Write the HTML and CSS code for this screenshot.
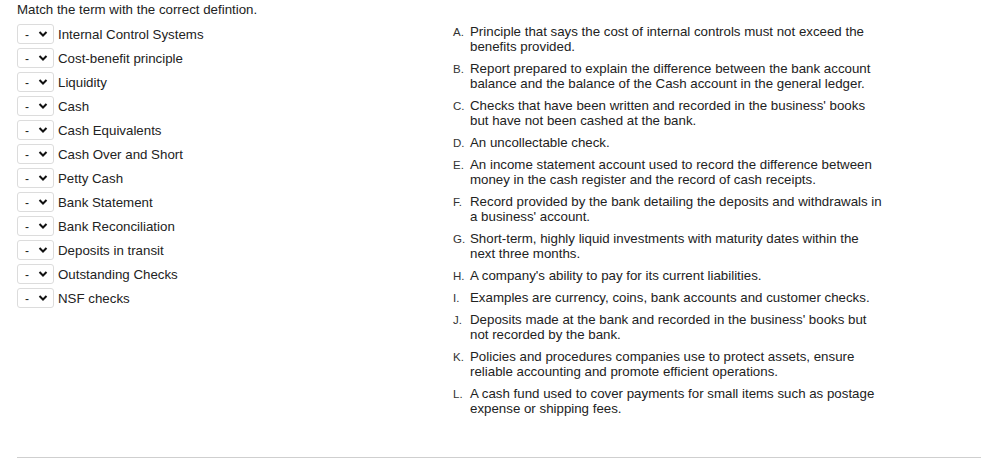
FILE: index.html
```html
<!DOCTYPE html>
<html>
<head>
<meta charset="utf-8">
<link rel="stylesheet" href="styles.css">
</head>
<body>
<div class="page">
  <div class="title">Match the term with the correct defintion.</div>
  <div class="match">
    <div class="terms">
      <div class="term"><span class="sel"><span class="dash">-</span><svg class="chev" viewBox="0 0 10 8" width="10" height="8"><path d="M1.5 2 L5 5.5 L8.5 2" fill="none" stroke="#111" stroke-width="2"/></svg></span><span class="label">Internal Control Systems</span></div>
      <div class="term"><span class="sel"><span class="dash">-</span><svg class="chev" viewBox="0 0 10 8" width="10" height="8"><path d="M1.5 2 L5 5.5 L8.5 2" fill="none" stroke="#111" stroke-width="2"/></svg></span><span class="label">Cost-benefit principle</span></div>
      <div class="term"><span class="sel"><span class="dash">-</span><svg class="chev" viewBox="0 0 10 8" width="10" height="8"><path d="M1.5 2 L5 5.5 L8.5 2" fill="none" stroke="#111" stroke-width="2"/></svg></span><span class="label">Liquidity</span></div>
      <div class="term"><span class="sel"><span class="dash">-</span><svg class="chev" viewBox="0 0 10 8" width="10" height="8"><path d="M1.5 2 L5 5.5 L8.5 2" fill="none" stroke="#111" stroke-width="2"/></svg></span><span class="label">Cash</span></div>
      <div class="term"><span class="sel"><span class="dash">-</span><svg class="chev" viewBox="0 0 10 8" width="10" height="8"><path d="M1.5 2 L5 5.5 L8.5 2" fill="none" stroke="#111" stroke-width="2"/></svg></span><span class="label">Cash Equivalents</span></div>
      <div class="term"><span class="sel"><span class="dash">-</span><svg class="chev" viewBox="0 0 10 8" width="10" height="8"><path d="M1.5 2 L5 5.5 L8.5 2" fill="none" stroke="#111" stroke-width="2"/></svg></span><span class="label">Cash Over and Short</span></div>
      <div class="term"><span class="sel"><span class="dash">-</span><svg class="chev" viewBox="0 0 10 8" width="10" height="8"><path d="M1.5 2 L5 5.5 L8.5 2" fill="none" stroke="#111" stroke-width="2"/></svg></span><span class="label">Petty Cash</span></div>
      <div class="term"><span class="sel"><span class="dash">-</span><svg class="chev" viewBox="0 0 10 8" width="10" height="8"><path d="M1.5 2 L5 5.5 L8.5 2" fill="none" stroke="#111" stroke-width="2"/></svg></span><span class="label">Bank Statement</span></div>
      <div class="term"><span class="sel"><span class="dash">-</span><svg class="chev" viewBox="0 0 10 8" width="10" height="8"><path d="M1.5 2 L5 5.5 L8.5 2" fill="none" stroke="#111" stroke-width="2"/></svg></span><span class="label">Bank Reconciliation</span></div>
      <div class="term"><span class="sel"><span class="dash">-</span><svg class="chev" viewBox="0 0 10 8" width="10" height="8"><path d="M1.5 2 L5 5.5 L8.5 2" fill="none" stroke="#111" stroke-width="2"/></svg></span><span class="label">Deposits in transit</span></div>
      <div class="term"><span class="sel"><span class="dash">-</span><svg class="chev" viewBox="0 0 10 8" width="10" height="8"><path d="M1.5 2 L5 5.5 L8.5 2" fill="none" stroke="#111" stroke-width="2"/></svg></span><span class="label">Outstanding Checks</span></div>
      <div class="term"><span class="sel"><span class="dash">-</span><svg class="chev" viewBox="0 0 10 8" width="10" height="8"><path d="M1.5 2 L5 5.5 L8.5 2" fill="none" stroke="#111" stroke-width="2"/></svg></span><span class="label">NSF checks</span></div>
    </div>
    <div class="defs">
      <div class="def"><span class="letter">A.</span><span class="text">Principle that says the cost of internal controls must not exceed the benefits provided.</span></div>
      <div class="def"><span class="letter">B.</span><span class="text">Report prepared to explain the difference between the bank account balance and the balance of the Cash account in the general ledger.</span></div>
      <div class="def"><span class="letter">C.</span><span class="text">Checks that have been written and recorded in the business' books but have not been cashed at the bank.</span></div>
      <div class="def"><span class="letter">D.</span><span class="text">An uncollectable check.</span></div>
      <div class="def"><span class="letter">E.</span><span class="text">An income statement account used to record the difference between money in the cash register and the record of cash receipts.</span></div>
      <div class="def"><span class="letter">F.</span><span class="text">Record provided by the bank detailing the deposits and withdrawals in a business' account.</span></div>
      <div class="def"><span class="letter">G.</span><span class="text">Short-term, highly liquid investments with maturity dates within the next three months.</span></div>
      <div class="def"><span class="letter">H.</span><span class="text">A company's ability to pay for its current liabilities.</span></div>
      <div class="def"><span class="letter">I.</span><span class="text">Examples are currency, coins, bank accounts and customer checks.</span></div>
      <div class="def"><span class="letter">J.</span><span class="text">Deposits made at the bank and recorded in the business' books but not recorded by the bank.</span></div>
      <div class="def"><span class="letter">K.</span><span class="text">Policies and procedures companies use to protect assets, ensure reliable accounting and promote efficient operations.</span></div>
      <div class="def"><span class="letter">L.</span><span class="text">A cash fund used to cover payments for small items such as postage expense or shipping fees.</span></div>
    </div>
  </div>
  <div class="rule"></div>
</div>
</body>
</html>
```

FILE: styles.css
```css
html, body {
  margin: 0;
  padding: 0;
  background: #fff;
}
body {
  font-family: "Liberation Sans", Arial, sans-serif;
  color: #222;
}
.page {
  padding: 2px 0 0 17px;
}
.title {
  font-size: 13.3px;
  line-height: 15px;
  color: #222;
}
.match {
  display: flex;
  margin-top: 4px;
}
.terms {
  width: 436px;
  display: flex;
  flex-direction: column;
  padding-top: 1px;
}
.term {
  display: flex;
  align-items: center;
  height: 24px;
}
.sel {
  box-sizing: border-box;
  width: 37px;
  height: 20px;
  border: 1px solid #dcdcdc;
  border-radius: 3px;
  display: flex;
  align-items: center;
  justify-content: space-between;
  padding: 0 5px 0 7px;
  margin-right: 4px;
  font-size: 12px;
  color: #222;
}
.dash {
  line-height: 1;
  margin-top: 2px;
}
.chev {
  display: block;
}
.label {
  font-size: 13.3px;
  line-height: 15px;
  color: #222;
}
.defs {
  display: flex;
  flex-direction: column;
  gap: 7px;
  padding-top: 3px;
}
.def {
  display: flex;
  align-items: flex-start;
}
.letter {
  width: 17px;
  flex: none;
  font-size: 11.5px;
  line-height: 13px;
  padding-top: 2px;
  color: #333;
}
.text {
  width: 415px;
  font-size: 13.3px;
  line-height: 15px;
  color: #222;
}
.rule {
  margin-top: 41px;
  height: 1px;
  background: #cfcfcf;
}
```
